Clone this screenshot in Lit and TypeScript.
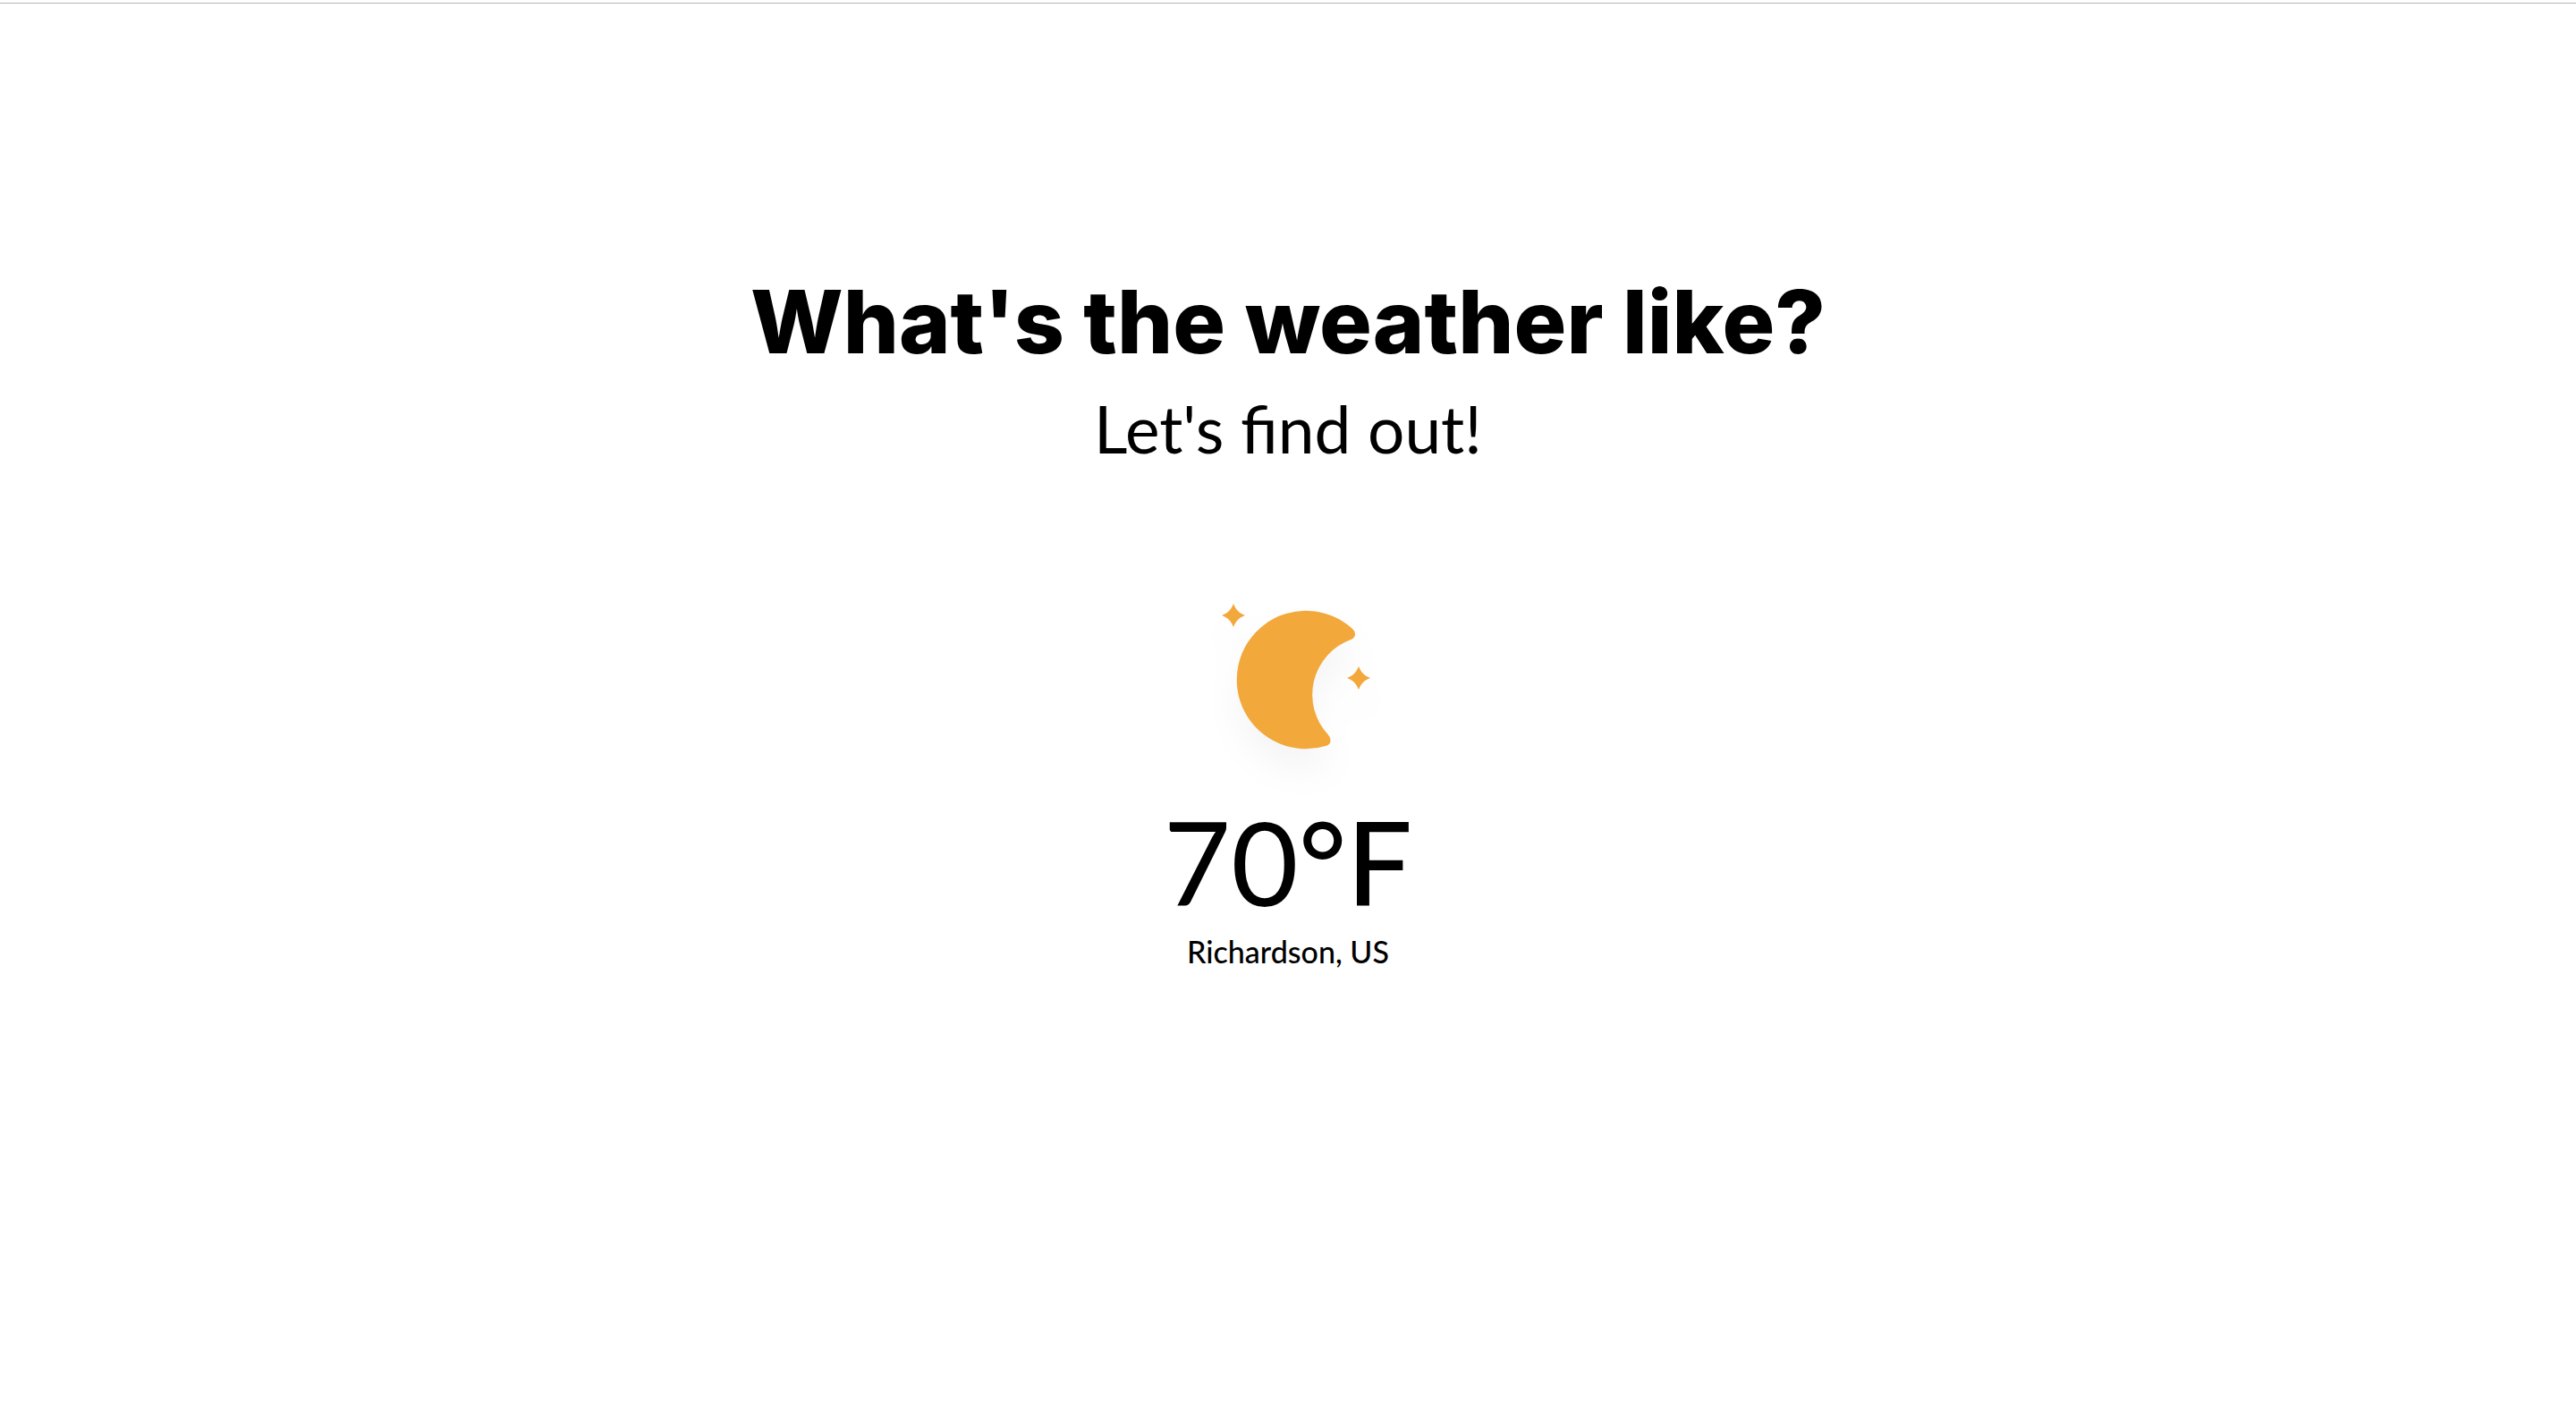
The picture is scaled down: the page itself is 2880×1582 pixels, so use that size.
import { LitElement, html, css, svg } from "lit";
import { customElement, property } from "lit/decorators.js";

const star = (x: number, y: number) => svg`<path
  transform="translate(${x} ${y})"
  d="M0 -13 Q2.600 -7 5 -5 Q7 -2.600 13 0 Q7 2.600 5 5 Q2.600 7 0 13 Q-2.600 7 -5 5 Q-7 2.600 -13 0 Q-7 -2.600 -5 -5 Q-2.600 -7 0 -13Z"/>`;

@customElement("weather-report")
export class WeatherReport extends LitElement {
  @property({ type: Number }) degrees = 0;
  @property() place = "";

  static styles = css`
    :host {
      display: flex;
      flex-direction: column;
      align-items: center;
      font-family: Lato, sans-serif;
    }
    .icon {
      display: block;
      width: 192px;
      height: 192px;
      fill: #f2a83b;
      overflow: visible;
      filter: drop-shadow(0 24px 18px rgb(0 0 0 / 0.04));
    }
    .temperature {
      margin: 40px 0 0;
      font-size: 130px;
      line-height: 128px;
    }
    .unit {
      font-weight: 500;
    }
    .place {
      margin: 12px 0 0;
      font-size: 34px;
      line-height: 50px;
      font-weight: 500;
    }
  `;

  render() {
    return html`
      <svg class="icon" viewBox="0 0 192 192" role="img" aria-label="Clear night">
        <path
          d="M168.300 36.300 A77.200 77.200 0 1 0 139 166.700 Q143.500 165.300 143.500 161 Q143.500 157.500 141 154.500 A65.500 65.500 0 0 1 166.500 48 Q171 46 171 42 Q171 38.600 168.300 36.300Z"
        />
        ${star(35, 21)} ${star(175, 91)}
      </svg>
      <p class="temperature">${this.degrees}<span class="unit">°F</span></p>
      <p class="place">${this.place}</p>
    `;
  }
}

@customElement("app-root")
export class AppRoot extends LitElement {
  static styles = css`
    :host {
      display: block;
      min-height: 100vh;
      box-sizing: border-box;
      padding-top: 3px;
      background: #fff;
      color: #000;
    }
    main {
      display: flex;
      flex-direction: column;
      align-items: center;
      padding: 285px 32px 64px;
      border-top: 1px solid #b3b3b3;
      text-align: center;
    }
    .title {
      margin: 0;
      font: 800 98px/142px Inter, sans-serif;
    }
    .subtitle {
      margin: 0 0 140px;
      font: 400 73px/96px Lato, sans-serif;
    }
  `;

  render() {
    return html`
      <main>
        <h1 class="title">What's the weather like?</h1>
        <p class="subtitle">Let's find out!</p>
        <weather-report degrees="70" place="Richardson, US"></weather-report>
      </main>
    `;
  }
}
